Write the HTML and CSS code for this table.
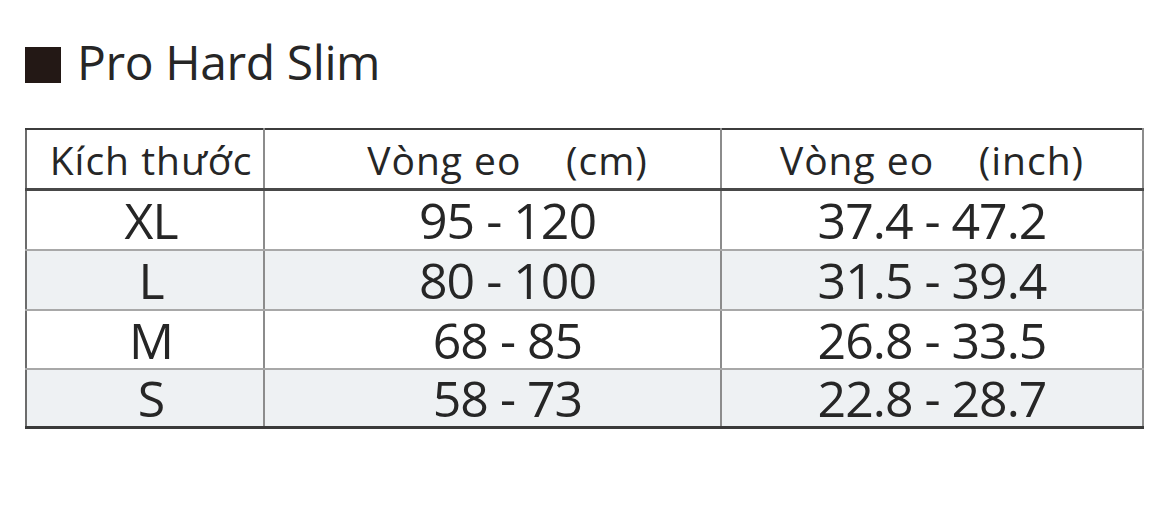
FILE: index.html
```html
<!DOCTYPE html>
<html lang="vi">
<head>
<meta charset="utf-8">
<title>Pro Hard Slim</title>
<link rel="stylesheet" href="styles.css">
</head>
<body>
<div class="page">
  <h1 class="title"><span class="square"></span><span class="title-text">Pro Hard Slim</span></h1>
  <table class="size-table">
    <colgroup>
      <col class="c1"><col class="c2"><col class="c3">
    </colgroup>
    <thead>
      <tr class="head">
        <th>Kích thước</th>
        <th>Vòng eo&nbsp;&nbsp;&nbsp; (cm)</th>
        <th>Vòng eo&nbsp;&nbsp;&nbsp; (inch)</th>
      </tr>
    </thead>
    <tbody>
      <tr class="r1"><td>XL</td><td>95 - 120</td><td>37.4 - 47.2</td></tr>
      <tr class="r2 shade"><td>L</td><td>80 - 100</td><td>31.5 - 39.4</td></tr>
      <tr class="r3"><td>M</td><td>68 - 85</td><td>26.8 - 33.5</td></tr>
      <tr class="r4 shade"><td>S</td><td>58 - 73</td><td>22.8 - 28.7</td></tr>
    </tbody>
  </table>
</div>
</body>
</html>
```
FILE: styles.css
```css
html, body {
  margin: 0;
  padding: 0;
  background: #ffffff;
}
body {
  font-family: "Open Sans", "Noto Sans", sans-serif;
  color: #262626;
}
.page {
  padding: 0 0 0 25px;
}
.title {
  margin: 0;
  padding-top: 40px;
  height: 90px;
  box-sizing: border-box;
  display: flex;
  align-items: center;
  font-weight: 400;
  font-size: 48px;
  letter-spacing: -0.4px;
  line-height: 1;
}
.square {
  width: 36px;
  height: 36px;
  background: #231815;
  margin-right: 16px;
  flex: none;
}
.title-text {
  position: relative;
  top: -3px;
}
.size-table {
  margin-top: 38px;
  width: 1117px;
  border-collapse: collapse;
  table-layout: fixed;
}
.c1 { width: 238px; }
.c2 { width: 457px; }
.c3 { width: 422px; }
.size-table th,
.size-table td {
  padding: 0;
  text-align: center;
  font-weight: 400;
  border-left: 2px solid #8c8c8c;
  border-right: 2px solid #8c8c8c;
  border-bottom: 2px solid #a8a8a8;
  white-space: nowrap;
}
.size-table tr > :first-child {
  border-left-color: #6c6c6c;
  padding-left: 12px;
}
.size-table tr > :nth-child(2) {
  padding-left: 30px;
}
.size-table th {
  font-size: 39px;
  height: 58px;
  border-top: 2px solid #3c3c3c;
  border-bottom: 3px solid #484848;
  letter-spacing: 1px;
}
.size-table td {
  font-size: 50px;
  letter-spacing: -1px;
  height: 58px;
  line-height: 1;
}
.size-table .r3 td { height: 57px; }
.size-table .r4 td {
  height: 56px;
  border-bottom: 3px solid #3a3a3a;
}
.shade td {
  background: #eef1f3;
}
```
